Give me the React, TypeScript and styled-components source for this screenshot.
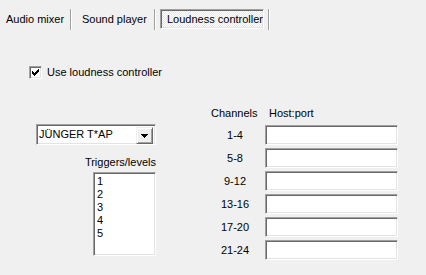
import React from "react";
import styled, { createGlobalStyle, css } from "styled-components";

const Global = createGlobalStyle`
  html, body { margin: 0; padding: 0; background: #f0f0f0; }
  * { box-sizing: border-box; }
`;

const sunken = css`
  border: 1px solid;
  border-color: #a0a0a0 #ffffff #ffffff #a0a0a0;
  box-shadow: inset 1px 1px 0 #696969, inset -1px -1px 0 #e3e3e3;
`;

const Window = styled.div`
  width: 426px;
  height: 275px;
  background: #f0f0f0;
  font-family: "Liberation Sans", Arial, sans-serif;
  font-size: 11px;
  line-height: 13px;
  color: #000;
  overflow: hidden;
`;

const TabBar = styled.div`
  display: flex;
  align-items: flex-start;
  padding-top: 9px;
  height: 30px;
`;

const Tab = styled.div<{ $w: number; $pad: number; $active?: boolean; $ml?: number }>`
  width: ${(p) => p.$w}px;
  height: 20px;
  padding-left: ${(p) => p.$pad}px;
  margin-left: ${(p) => p.$ml ?? 0}px;
  display: flex;
  align-items: center;
  white-space: nowrap;
  ${(p) =>
    p.$active &&
    css`
      ${sunken}
      background: repeating-conic-gradient(#ffffff 0% 25%, #e8e8e8 0% 50%) 0 0 / 2px 2px;
    `}
`;

const Sep = styled.div<{ $ml?: number }>`
  width: 2px;
  height: 21px;
  margin-left: ${(p) => p.$ml ?? 0}px;
  border-left: 1px solid #a0a0a0;
  border-right: 1px solid #ffffff;
`;

const OptionRow = styled.label`
  display: flex;
  align-items: center;
  gap: 5px;
  margin-top: 36px;
  padding-left: 29px;
  height: 13px;
`;

const CheckBox = styled.span`
  ${sunken}
  width: 13px;
  height: 13px;
  background: #fff;
  display: flex;
  align-items: center;
  justify-content: center;
  flex: none;
`;

const Main = styled.div`
  display: flex;
  align-items: flex-start;
  margin-top: 28px;
  padding-left: 36px;
`;

const LeftCol = styled.div`
  width: 120px;
  padding-top: 17px;
  display: flex;
  flex-direction: column;
  align-items: flex-end;
`;

const Combo = styled.div`
  ${sunken}
  width: 120px;
  height: 21px;
  background: #fff;
  display: flex;
  align-items: stretch;
  padding: 1px;
`;

const ComboText = styled.div`
  flex: 1;
  padding-left: 1px;
  display: flex;
  align-items: center;
  white-space: nowrap;
`;

const ComboButton = styled.div`
  width: 17px;
  height: 17px;
  margin: 1px 1px 0 0;
  background: #f0f0f0;
  border: 1px solid;
  border-color: #f0f0f0 #696969 #696969 #f0f0f0;
  box-shadow: inset 1px 1px 0 #ffffff, inset -1px -1px 0 #a0a0a0;
  display: flex;
  align-items: center;
  justify-content: center;
`;

const FieldLabel = styled.div`
  margin-top: 11px;
  text-align: right;
`;

const ListBox = styled.div`
  ${sunken}
  margin-top: 3px;
  width: 63px;
  height: 84px;
  background: #fff;
  padding: 2px 3px;
`;

const ListItem = styled.div`
  height: 13px;
`;

const ChannelGrid = styled.div`
  margin-left: 55px;
  display: grid;
  grid-template-columns: 46px 133px;
  grid-auto-rows: 20px;
  grid-template-rows: 15px;
  column-gap: 8px;
  row-gap: 3px;
`;

const Head = styled.div<{ $pad?: number }>`
  padding-left: ${(p) => p.$pad ?? 0}px;
  white-space: nowrap;
`;

const RowLabel = styled.div`
  display: flex;
  align-items: center;
  justify-content: center;
  padding-left: 2px;
`;

const TextInput = styled.div`
  ${sunken}
  background: #fff;
  height: 20px;
`;

const checkCols = [2, 3, 4, 3, 2, 1, 0];

export default function App() {
  const channels = ["1-4", "5-8", "9-12", "13-16", "17-20", "21-24"];
  return (
    <Window>
      <Global />
      <TabBar>
        <Tab $w={70} $pad={6}>Audio mixer</Tab>
        <Sep />
        <Tab $w={82} $pad={10}>Sound player</Tab>
        <Sep />
        <Tab $w={104} $pad={6} $ml={4} $active>
          Loudness controller
        </Tab>
        <Sep $ml={4} />
      </TabBar>

      <OptionRow>
        <CheckBox>
          <svg width="9" height="9" viewBox="0 0 9 9" shapeRendering="crispEdges">
            {checkCols.map((t, i) => (
              <rect key={i} x={i + 1} y={t + 1} width="1" height="3" fill="#000" />
            ))}
          </svg>
        </CheckBox>
        <span>Use loudness controller</span>
      </OptionRow>

      <Main>
        <LeftCol>
          <Combo>
            <ComboText>JÜNGER T*AP</ComboText>
            <ComboButton>
              <svg width="7" height="4" viewBox="0 0 7 4" shapeRendering="crispEdges">
                <polygon points="0,0 7,0 3.5,4" fill="#000" />
              </svg>
            </ComboButton>
          </Combo>
          <FieldLabel>Triggers/levels</FieldLabel>
          <ListBox>
            {["1", "2", "3", "4", "5"].map((n) => (
              <ListItem key={n}>{n}</ListItem>
            ))}
          </ListBox>
        </LeftCol>

        <ChannelGrid>
          <Head>Channels</Head>
          <Head $pad={4}>Host:port</Head>
          {channels.map((c) => (
            <React.Fragment key={c}>
              <RowLabel>{c}</RowLabel>
              <TextInput />
            </React.Fragment>
          ))}
        </ChannelGrid>
      </Main>
    </Window>
  );
}
